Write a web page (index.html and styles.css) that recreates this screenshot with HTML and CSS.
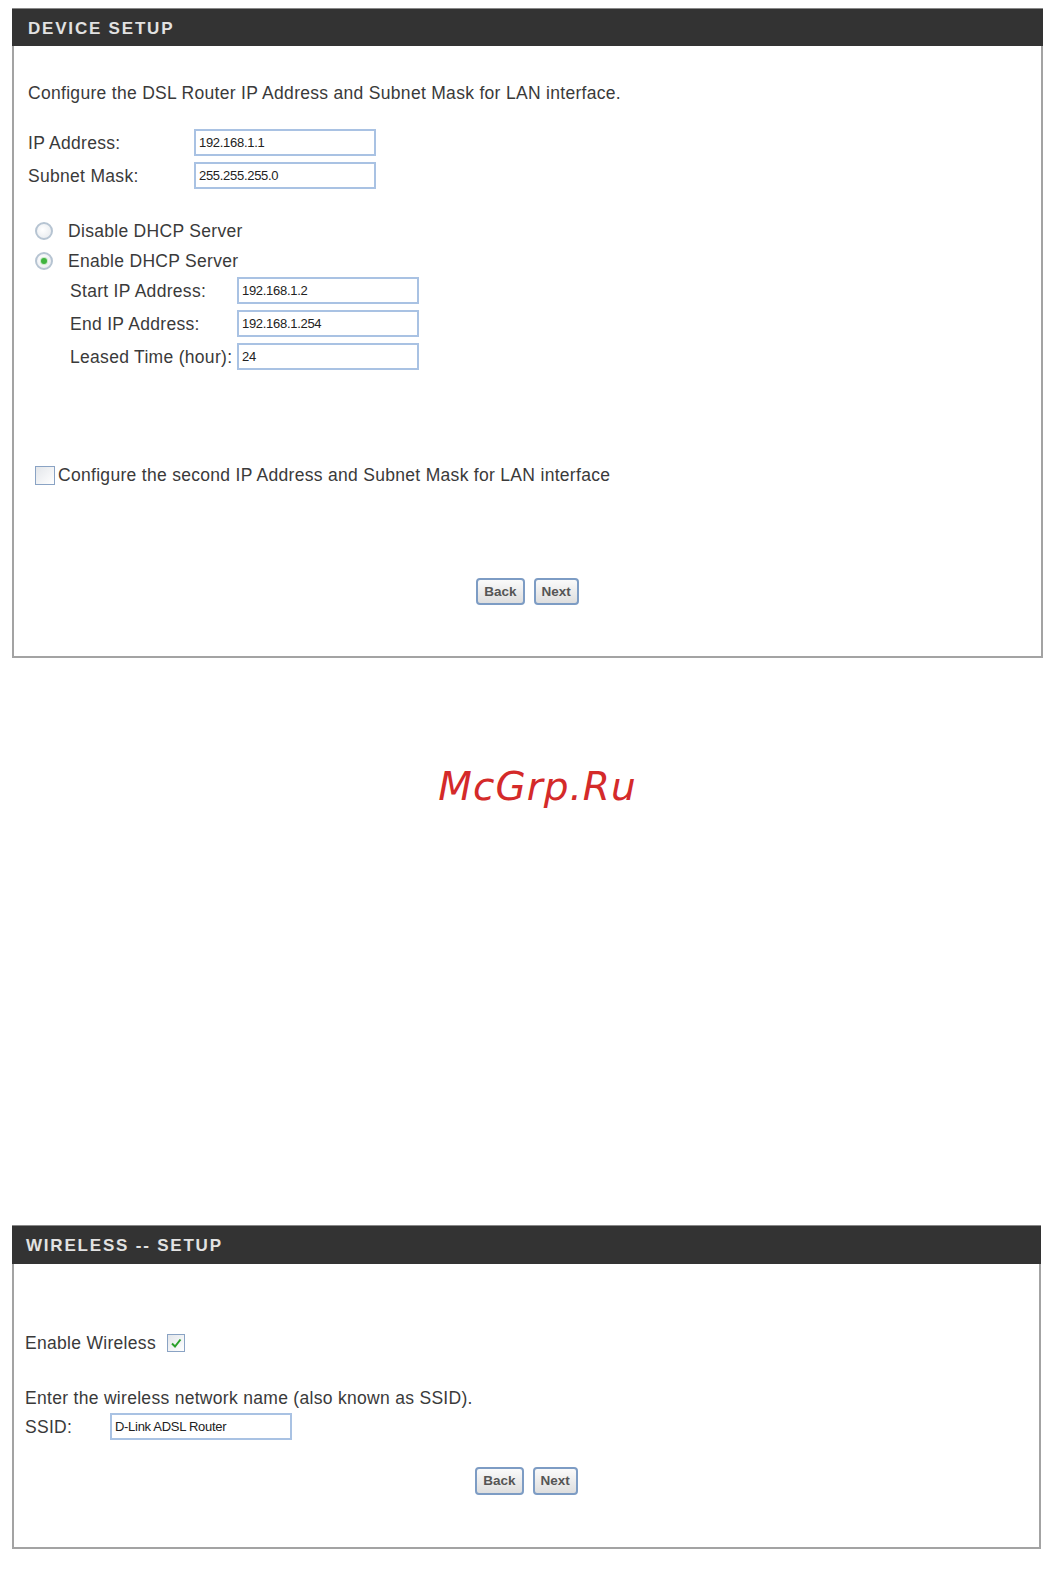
FILE: index.html
```html
<!DOCTYPE html>
<html lang="en">
<head>
<meta charset="UTF-8">
<title>Device Setup</title>
<link rel="stylesheet" href="styles.css">
</head>
<body>

<div class="panel panel-device">
  <div class="panel-head">DEVICE SETUP</div>
  <div class="panel-body">
    <div class="intro">Configure the DSL Router IP Address and Subnet Mask for LAN interface.</div>

    <div class="field-group">
      <div class="field">
        <span class="label">IP Address:</span>
        <span class="input">192.168.1.1</span>
      </div>
      <div class="field">
        <span class="label">Subnet Mask:</span>
        <span class="input">255.255.255.0</span>
      </div>
    </div>

    <div class="radio-row first">
      <span class="radio"></span>
      <span>Disable DHCP Server</span>
    </div>
    <div class="radio-row">
      <span class="radio checked"></span>
      <span>Enable DHCP Server</span>
    </div>

    <div class="field-group dhcp">
      <div class="field">
        <span class="label">Start IP Address:</span>
        <span class="input">192.168.1.2</span>
      </div>
      <div class="field">
        <span class="label">End IP Address:</span>
        <span class="input">192.168.1.254</span>
      </div>
      <div class="field">
        <span class="label">Leased Time (hour):</span>
        <span class="input">24</span>
      </div>
    </div>

    <div class="check-row">
      <span class="checkbox"></span>
      <span>Configure the second IP Address and Subnet Mask for LAN interface</span>
    </div>

    <div class="buttons">
      <span class="btn">Back</span>
      <span class="btn">Next</span>
    </div>
  </div>
</div>

<div class="watermark">McGrp.Ru</div>

<div class="panel panel-wireless">
  <div class="panel-head">WIRELESS -- SETUP</div>
  <div class="panel-body">
    <div class="enable-row">
      <span>Enable Wireless</span>
      <span class="checkbox checked">
        <svg width="12" height="12" viewBox="0 0 12 12"><path d="M2 6.5 L5 9.5 L10.5 2.5" fill="none" stroke="#2aa02a" stroke-width="2"/></svg>
      </span>
    </div>
    <div class="ssid-text">Enter the wireless network name (also known as SSID).</div>
    <div class="field ssid">
      <span class="label">SSID:</span>
      <span class="input">D-Link ADSL Router</span>
    </div>
    <div class="buttons">
      <span class="btn">Back</span>
      <span class="btn">Next</span>
    </div>
  </div>
</div>

</body>
</html>
```

FILE: styles.css
```css
body {
  margin: 0;
  padding: 8px 0 0 0;
  background: #fff;
  font-family: 'Liberation Sans', Arial, sans-serif;
  font-size: 17.5px;
  letter-spacing: 0.3px;
  color: #3a3a3a;
}
.panel {
  margin-left: 12px;
  border: 2px solid #a3a3a3;
  border-top: none;
  background: #fff;
  box-sizing: border-box;
}
.panel-device {
  width: 1031px;
  height: 650px;
}
.panel-wireless {
  width: 1029px;
  height: 324px;
}
.panel-head {
  margin: 0 -2px;
  background: #333;
  color: #e2e2e2;
  font-weight: bold;
  font-size: 17px;
  letter-spacing: 1.8px;
  height: 38px;
  line-height: 40px;
  padding-left: 16px;
  border-top: 1px solid #888;
  box-sizing: border-box;
}
.panel-body {
  padding: 37px 14px 0 14px;
  line-height: 20px;
}
.intro {
  height: 20px;
}
.field-group {
  margin-top: 26px;
  display: flex;
  flex-direction: column;
  gap: 6px;
}
.field {
  display: flex;
  align-items: center;
  height: 27px;
}
.label {
  width: 166px;
  flex: none;
  white-space: nowrap;
}
.input {
  width: 182px;
  height: 27px;
  box-sizing: border-box;
  border: 2px solid #a9c2e3;
  font-size: 13px;
  letter-spacing: -0.3px;
  color: #222;
  line-height: 23px;
  padding-left: 3px;
}
.radio-row {
  display: flex;
  align-items: center;
  height: 20px;
  margin-top: 10px;
}
.radio-row.first {
  margin-top: 32px;
}
.radio {
  width: 18px;
  height: 18px;
  box-sizing: border-box;
  margin-left: 7px;
  margin-right: 15px;
  border: 2px solid #b6c4d2;
  border-radius: 50%;
  background: radial-gradient(circle at 40% 40%, #fff 0%, #e4e8ec 100%);
  position: relative;
}
.radio.checked::after {
  content: "";
  position: absolute;
  left: 4px;
  top: 4px;
  width: 6px;
  height: 6px;
  border-radius: 50%;
  background: #3fb43f;
  box-shadow: 0 0 0 1px #c8e8c8;
}
.field-group.dhcp {
  margin-top: 6px;
  padding-left: 42px;
}
.field-group.dhcp .label {
  width: 167px;
}
.check-row {
  display: flex;
  align-items: center;
  height: 20px;
  margin-top: 95px;
}
.checkbox {
  width: 18px;
  height: 18px;
  box-sizing: border-box;
  border: 1.5px solid #8aa3c4;
  background: linear-gradient(135deg, #e3e6ea, #fff);
  display: inline-flex;
  align-items: center;
  justify-content: center;
}
.check-row .checkbox {
  margin-left: 7px;
  margin-right: 3px;
  width: 20px;
  height: 19px;
}
.buttons {
  display: flex;
  justify-content: center;
  gap: 9px;
  margin-top: 93px;
}
.btn {
  height: 27px;
  box-sizing: border-box;
  padding: 0 6px;
  border: 2px solid #7d9cc4;
  border-radius: 4px;
  background: linear-gradient(#fafafa, #dedede);
  font-size: 13.5px;
  font-weight: bold;
  letter-spacing: 0;
  color: #555;
  line-height: 23px;
}
.watermark {
  margin: 108px 0 0 0;
  text-align: center;
  padding-left: 12px;
  height: 42px;
  line-height: 42px;
  font-family: 'DejaVu Sans', sans-serif;
  font-style: oblique;
  font-size: 39px;
  letter-spacing: 1px;
  color: #d42a2a;
}
.panel-wireless {
  margin-top: 417px;
}
.panel-wireless .panel-head {
  height: 39px;
  padding-left: 14px;
}
.panel-wireless .panel-body {
  padding: 69px 11px 0 11px;
}
.enable-row {
  display: flex;
  align-items: center;
  height: 20px;
  gap: 11px;
}
.ssid-text {
  margin-top: 35px;
}
.field.ssid {
  margin-top: 5px;
}
.field.ssid .label {
  width: 85px;
}
.panel-wireless .buttons {
  margin-top: 27px;
}
.panel-wireless .btn {
  height: 28px;
}
```
